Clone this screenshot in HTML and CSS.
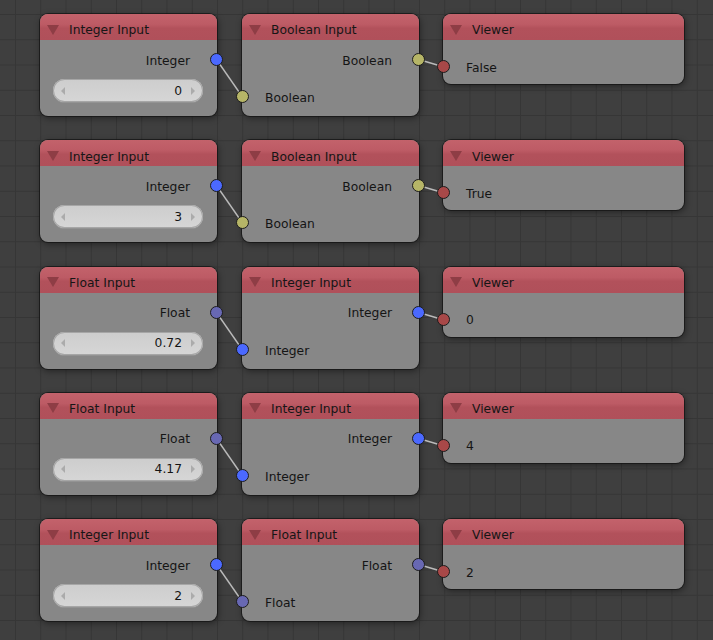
FILE: index.html
```html
<!DOCTYPE html>
<html>
<head>
<meta charset="utf-8">
<link rel="stylesheet" href="styles.css">
</head>
<body>
<div class="canvas">

  <div class="row">
    <svg class="links" viewBox="0 0 713 102"><line x1="216.5" y1="45.5" x2="242.5" y2="83"/><line x1="418.7" y1="45.5" x2="444" y2="53"/></svg>
    <div class="node in">
      <div class="hdr"><span class="tri"></span><span class="title">Integer Input</span></div>
      <div class="body">
        <div class="sock-row out"><span class="label">Integer</span><span class="sock s-int"></span></div>
        <div class="field"><span class="arr l"></span><span class="val">0</span><span class="arr r"></span></div>
      </div>
    </div>
    <div class="node mid">
      <div class="hdr"><span class="tri"></span><span class="title">Boolean Input</span></div>
      <div class="body">
        <div class="sock-row out"><span class="label">Boolean</span><span class="sock s-bool"></span></div>
        <div class="sock-row inp"><span class="sock s-bool"></span><span class="label">Boolean</span></div>
      </div>
    </div>
    <div class="node view">
      <div class="hdr"><span class="tri"></span><span class="title">Viewer</span></div>
      <div class="body">
        <div class="sock-row inp"><span class="sock s-gen"></span><span class="label">False</span></div>
      </div>
    </div>
  </div>

  <div class="row">
    <svg class="links" viewBox="0 0 713 102"><line x1="216.5" y1="45.5" x2="242.5" y2="83"/><line x1="418.7" y1="45.5" x2="444" y2="53"/></svg>
    <div class="node in">
      <div class="hdr"><span class="tri"></span><span class="title">Integer Input</span></div>
      <div class="body">
        <div class="sock-row out"><span class="label">Integer</span><span class="sock s-int"></span></div>
        <div class="field"><span class="arr l"></span><span class="val">3</span><span class="arr r"></span></div>
      </div>
    </div>
    <div class="node mid">
      <div class="hdr"><span class="tri"></span><span class="title">Boolean Input</span></div>
      <div class="body">
        <div class="sock-row out"><span class="label">Boolean</span><span class="sock s-bool"></span></div>
        <div class="sock-row inp"><span class="sock s-bool"></span><span class="label">Boolean</span></div>
      </div>
    </div>
    <div class="node view">
      <div class="hdr"><span class="tri"></span><span class="title">Viewer</span></div>
      <div class="body">
        <div class="sock-row inp"><span class="sock s-gen"></span><span class="label">True</span></div>
      </div>
    </div>
  </div>

  <div class="row">
    <svg class="links" viewBox="0 0 713 102"><line x1="216.5" y1="45.5" x2="242.5" y2="83"/><line x1="418.7" y1="45.5" x2="444" y2="53"/></svg>
    <div class="node in">
      <div class="hdr"><span class="tri"></span><span class="title">Float Input</span></div>
      <div class="body">
        <div class="sock-row out"><span class="label">Float</span><span class="sock s-float"></span></div>
        <div class="field"><span class="arr l"></span><span class="val">0.72</span><span class="arr r"></span></div>
      </div>
    </div>
    <div class="node mid">
      <div class="hdr"><span class="tri"></span><span class="title">Integer Input</span></div>
      <div class="body">
        <div class="sock-row out"><span class="label">Integer</span><span class="sock s-int"></span></div>
        <div class="sock-row inp"><span class="sock s-int"></span><span class="label">Integer</span></div>
      </div>
    </div>
    <div class="node view">
      <div class="hdr"><span class="tri"></span><span class="title">Viewer</span></div>
      <div class="body">
        <div class="sock-row inp"><span class="sock s-gen"></span><span class="label">0</span></div>
      </div>
    </div>
  </div>

  <div class="row">
    <svg class="links" viewBox="0 0 713 102"><line x1="216.5" y1="45.5" x2="242.5" y2="83"/><line x1="418.7" y1="45.5" x2="444" y2="53"/></svg>
    <div class="node in">
      <div class="hdr"><span class="tri"></span><span class="title">Float Input</span></div>
      <div class="body">
        <div class="sock-row out"><span class="label">Float</span><span class="sock s-float"></span></div>
        <div class="field"><span class="arr l"></span><span class="val">4.17</span><span class="arr r"></span></div>
      </div>
    </div>
    <div class="node mid">
      <div class="hdr"><span class="tri"></span><span class="title">Integer Input</span></div>
      <div class="body">
        <div class="sock-row out"><span class="label">Integer</span><span class="sock s-int"></span></div>
        <div class="sock-row inp"><span class="sock s-int"></span><span class="label">Integer</span></div>
      </div>
    </div>
    <div class="node view">
      <div class="hdr"><span class="tri"></span><span class="title">Viewer</span></div>
      <div class="body">
        <div class="sock-row inp"><span class="sock s-gen"></span><span class="label">4</span></div>
      </div>
    </div>
  </div>

  <div class="row">
    <svg class="links" viewBox="0 0 713 102"><line x1="216.5" y1="45.5" x2="242.5" y2="83"/><line x1="418.7" y1="45.5" x2="444" y2="53"/></svg>
    <div class="node in">
      <div class="hdr"><span class="tri"></span><span class="title">Integer Input</span></div>
      <div class="body">
        <div class="sock-row out"><span class="label">Integer</span><span class="sock s-int"></span></div>
        <div class="field"><span class="arr l"></span><span class="val">2</span><span class="arr r"></span></div>
      </div>
    </div>
    <div class="node mid">
      <div class="hdr"><span class="tri"></span><span class="title">Float Input</span></div>
      <div class="body">
        <div class="sock-row out"><span class="label">Float</span><span class="sock s-float"></span></div>
        <div class="sock-row inp"><span class="sock s-float"></span><span class="label">Float</span></div>
      </div>
    </div>
    <div class="node view">
      <div class="hdr"><span class="tri"></span><span class="title">Viewer</span></div>
      <div class="body">
        <div class="sock-row inp"><span class="sock s-gen"></span><span class="label">2</span></div>
      </div>
    </div>
  </div>

</div>
</body>
</html>
```

FILE: styles.css
```css
html, body {
  margin: 0;
  padding: 0;
}

body {
  width: 713px;
  height: 640px;
  overflow: hidden;
  background-color: #3f3f3f;
  background-image:
    linear-gradient(to right, #363636 1px, transparent 1px),
    linear-gradient(to bottom, #363636 1px, transparent 1px);
  background-size: 25.25px 25.25px;
  background-position: 15px 14px;
  font-family: "DejaVu Sans", sans-serif;
  font-size: 12.3px;
  color: #151515;
}

.canvas {
  padding-top: 14px;
  display: flex;
  flex-direction: column;
  gap: 24.25px;
}

.row {
  position: relative;
  display: flex;
  align-items: flex-start;
  padding-left: 40px;
  height: 102px;
}

.links {
  position: absolute;
  left: 0;
  top: 0;
  width: 713px;
  height: 102px;
  z-index: 1;
  overflow: visible;
}

.links line {
  stroke: #bababa;
  stroke-width: 1.4;
}

.node {
  position: relative;
  box-sizing: border-box;
  background: #878787;
  border-radius: 8px;
  box-shadow: 0 0 0 1px rgba(20, 20, 20, 0.75), 1px 2px 7px rgba(0, 0, 0, 0.45);
}

.node.in,
.node.mid {
  width: 177px;
  height: 102px;
}

.node.mid {
  margin-left: 25px;
}

.node.view {
  margin-left: 24px;
  width: 241px;
  height: 70px;
}

.hdr {
  box-sizing: border-box;
  height: 26px;
  border-radius: 8px 8px 0 0;
  background: linear-gradient(to bottom, #c3626b 0%, #bd5b65 40%, #b2515b 55%, #b0505a 100%);
  display: flex;
  align-items: center;
  padding: 5px 0 0 7px;
}

.tri {
  width: 0;
  height: 0;
  border-left: 6px solid transparent;
  border-right: 6px solid transparent;
  border-top: 10px solid #8e3d45;
  margin-right: 10px;
}

.title {
  line-height: 1;
  padding-top: 2px;
  color: #161616;
}

.node.in .body,
.node.mid .body {
  padding-top: 8px;
}

.node.view .body {
  padding-top: 15px;
}

.sock-row {
  position: relative;
  box-sizing: border-box;
  height: 23px;
  padding-top: 2px;
  display: flex;
  align-items: center;
}

.sock-row.out {
  justify-content: flex-end;
  padding-right: 27px;
}

.sock-row.inp {
  padding-left: 23px;
}

.node.mid .sock-row.inp {
  margin-top: 14px;
  padding-top: 3px;
}

.sock {
  position: absolute;
  top: 50%;
  width: 11px;
  height: 11px;
  margin-top: -6.5px;
  border: 1px solid #1c1c1c;
  border-radius: 50%;
  z-index: 2;
}

.out .sock {
  right: -6px;
}

.inp .sock {
  left: -6px;
}

.s-int {
  background: #4b69ff;
}

.s-bool {
  background: #b6b567;
}

.s-float {
  background: #6868b3;
}

.s-gen {
  background: #a84848;
}

.field {
  position: relative;
  box-sizing: border-box;
  margin: 8px 14px 0 13px;
  height: 23px;
  border-radius: 12px;
  background: linear-gradient(to bottom, #cdcdcd, #d6d6d6);
  box-shadow: inset 0 0 0 1px #a6a6a6, 0 1px 0 rgba(160, 160, 160, 0.5);
  display: flex;
  align-items: center;
  justify-content: flex-end;
  padding-right: 21px;
}

.val {
  color: #141414;
}

.arr {
  position: absolute;
  top: 50%;
  margin-top: -4px;
  width: 0;
  height: 0;
  border-top: 4px solid transparent;
  border-bottom: 4px solid transparent;
}

.arr.l {
  left: 8px;
  border-right: 4px solid #ababab;
}

.arr.r {
  right: 8px;
  border-left: 4px solid #ababab;
}
```
